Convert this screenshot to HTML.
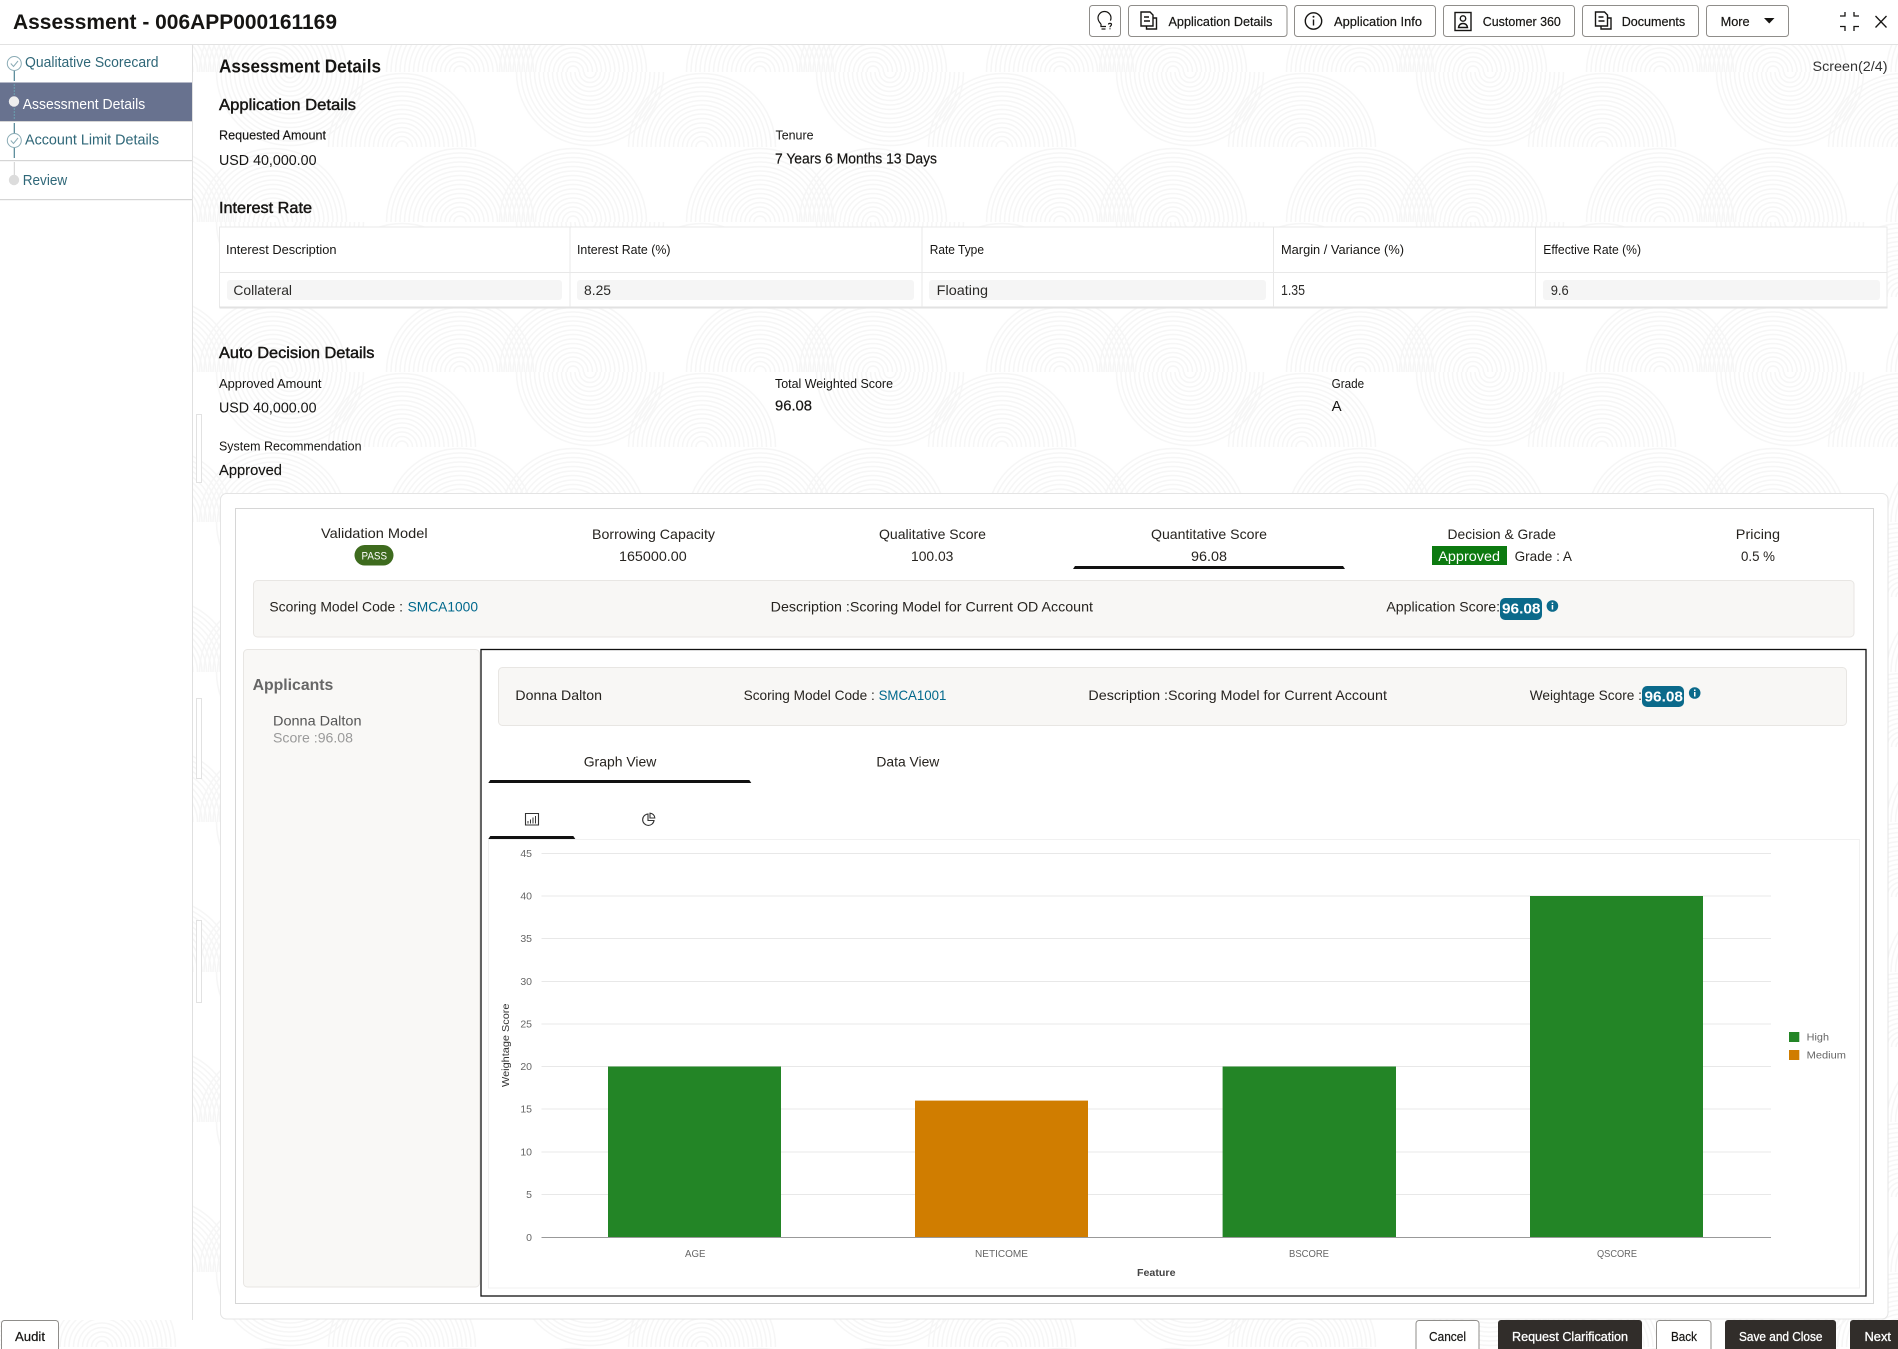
<!DOCTYPE html>
<html lang="en"><head><meta charset="utf-8"><title>Assessment - 006APP000161169</title>
<style>
html,body{margin:0;padding:0;background:#fff;width:1898px;height:1349px;overflow:hidden}
svg{display:block}
text{font-family:"Liberation Sans",sans-serif;fill:#161513;white-space:pre}
.m{stroke:#161513;stroke-width:.3}
.l{font-size:13px}.v{font-size:14.5px}.h{font-size:16px;stroke:#161513;stroke-width:.45}
.tb{font-size:13px}.c{font-size:14px;fill:#2b2a28}
.s{font-size:14.5px;fill:#2f6778}
.a{font-size:14px;fill:#26231f}
.btn{font-size:13px;stroke:#161513;stroke-width:.2}
.w{fill:#fff;stroke:#fff;stroke-width:.3;font-size:13px}
.t{font-size:10.5px;fill:#666}
</style></head><body>
<svg xmlns="http://www.w3.org/2000/svg" width="1898" height="1349" viewBox="0 0 1898 1349">
<defs>
<g id="rings" fill="none" stroke="#f6f6f6" stroke-width="1.5">
<circle r="6"/><circle r="10.5"/><circle r="15"/><circle r="19.5"/><circle r="24"/><circle r="28.5"/><circle r="33"/><circle r="37.5"/><circle r="42"/><circle r="46.5"/><circle r="51"/><circle r="55.5"/><circle r="60"/><circle r="64.5"/><circle r="69"/><circle r="73.5"/>
</g>
<clipPath id="r1"><rect x="0" y="0" width="300" height="75"/></clipPath>
<clipPath id="r2"><rect x="0" y="75" width="300" height="75"/></clipPath>
<pattern id="bg" patternUnits="userSpaceOnUse" x="0" y="72" width="300" height="150">
<rect width="300" height="150" fill="#fff"/>
<g clip-path="url(#r1)">
<use href="#rings" x="102" y="75"/>
<use href="#rings" x="290" y="0"/>
<use href="#rings" x="-10" y="0"/>
</g>
<g clip-path="url(#r2)">
<use href="#rings" x="160" y="150"/>
<use href="#rings" x="273" y="150"/>
<use href="#rings" x="-27" y="150"/>
</g>
</pattern>
</defs>

<!-- page background -->
<rect x="0" y="44" width="1898" height="1305" fill="url(#bg)"/>

<!-- header -->
<rect x="0" y="0" width="1898" height="44" fill="#fff"/>
<rect x="0" y="44" width="1898" height="1" fill="#e2e2e2"/>
<text x="13" y="29" font-size="21" font-weight="700" textLength="324" lengthAdjust="spacingAndGlyphs">Assessment - 006APP000161169</text>

<g fill="#fff" stroke="#8f8d8a">
<rect x="1089.5" y="5.5" width="31" height="31" rx="3"/>
<rect x="1128.5" y="5.5" width="158.5" height="31" rx="3"/>
<rect x="1294.5" y="5.5" width="141" height="31" rx="3"/>
<rect x="1443.5" y="5.5" width="131" height="31" rx="3"/>
<rect x="1582.5" y="5.5" width="116" height="31" rx="3"/>
<rect x="1706.5" y="5.5" width="82" height="31" rx="3"/>
</g>
<!-- help bulb -->
<g fill="none" stroke="#161513" stroke-width="1.2">
<path d="M1101 24c-2-2-3-3.5-3-6a6.5 6.5 0 0 1 13 0c0 1-.2 1.8-.6 2.6"/>
<path d="M1101 24v2.5h5"/><path d="M1101.5 29h4"/>
<path d="M1108.5 24.5c0-1.5 3-1.500 3 0 0 1.300-1.500 1.300-1.500 2.700"/>
<path d="M1110 28.300v1"/>
</g>
<!-- doc icons -->
<g fill="none" stroke="#161513" stroke-width="1.4">
<path d="M1141 12h9l3 3v11h-12z"/><path d="M1153 18h3.5v11h-10v-3"/><path d="M1144 17h5M1144 21h6"/>
<path d="M1595.5 12h9l3 3v11h-12z"/><path d="M1607.5 18h3.5v11h-10v-3"/><path d="M1598.5 17h5M1598.5 21h6"/>
<circle cx="1313.5" cy="21" r="8.2"/>
<path d="M1313.5 19.5v6"/>
<rect x="1455" y="12.5" width="16" height="18"/>
<circle cx="1463" cy="18.5" r="2.7"/>
<path d="M1458.5 27.500c.5-3 2-4 4.500-4s4 1 4.500 4z"/>
</g>
<circle cx="1313.5" cy="16.7" r="1" fill="#161513"/>
<text x="1168.5" y="26" class="btn" textLength="104" lengthAdjust="spacingAndGlyphs">Application Details</text>
<text x="1334" y="26" class="btn" textLength="88" lengthAdjust="spacingAndGlyphs">Application Info</text>
<text x="1482.8" y="26" class="btn" textLength="78" lengthAdjust="spacingAndGlyphs">Customer 360</text>
<text x="1621.7" y="26" class="btn" textLength="63.5" lengthAdjust="spacingAndGlyphs">Documents</text>
<text x="1720.6" y="26" class="btn" textLength="29" lengthAdjust="spacingAndGlyphs">More</text>
<path d="M1764 18h10.5l-5.250 5.500z" fill="#161513"/>
<g fill="none" stroke="#161513" stroke-width="1.3">
<path d="M1845 12v4h-5M1854 12v4h5M1845 31v-4.5h-5M1854 31v-4.500h5"/>
<path d="M1875.5 16l11 11.500M1886.5 16l-11 11.500"/>
</g>

<!-- sidebar -->
<rect x="0" y="45" width="192.5" height="1275" fill="#fff"/>
<rect x="192" y="45" width="1" height="1275" fill="#e0e0e0"/>
<rect x="0" y="82.5" width="192" height="38.5" fill="#68728f"/>
<rect x="0" y="160" width="192" height="1.2" fill="#d5d5d5"/>
<rect x="0" y="199" width="192" height="1.2" fill="#d5d5d5"/>
<rect x="0" y="121" width="192" height="1" fill="#d5d5d5"/>
<g fill="none" stroke="#8aabb5" stroke-width="1">
<circle cx="14.3" cy="63.5" r="7"/>
<path d="M10.8 63.5l2.700 3 4.500-5.500"/>
<circle cx="14.3" cy="140.5" r="7"/>
<path d="M10.8 140.5l2.700 3 4.500-5.500"/>
</g>
<path d="M14.3 71v10M14.3 123v10M14.3 148v10" stroke="#4e8394" stroke-width="1.2"/>
<path d="M14.3 84v11M14.3 108v11" stroke="#6aa0b0" stroke-width="1" stroke-dasharray="2 1"/>
<path d="M14.3 162v13" stroke="#cfcfcf" stroke-width="1"/>
<circle cx="14" cy="101.5" r="5.2" fill="#eee"/>
<circle cx="14" cy="180" r="5.2" fill="#dcdcdc"/>
<text x="25" y="67" class="s" textLength="133.5" lengthAdjust="spacingAndGlyphs">Qualitative Scorecard</text>
<text x="22.7" y="109" class="s" style="fill:#fff" textLength="122.5" lengthAdjust="spacingAndGlyphs">Assessment Details</text>
<text x="25" y="144.5" class="s" textLength="134" lengthAdjust="spacingAndGlyphs">Account Limit Details</text>
<text x="22.7" y="185" class="s" textLength="44.5" lengthAdjust="spacingAndGlyphs">Review</text>

<!-- scroll handles -->
<g fill="#fff" stroke="#e2e2e2"><rect x="196.5" y="414.5" width="5" height="68"/><rect x="196.5" y="698.5" width="5" height="80"/><rect x="196.5" y="920.5" width="5" height="82"/></g>

<!-- main headings -->
<text x="219" y="72.5" font-size="18" font-weight="700" textLength="162" lengthAdjust="spacingAndGlyphs">Assessment Details</text>
<text x="1812.5" y="71" font-size="14" textLength="75" lengthAdjust="spacingAndGlyphs" style="fill:#333">Screen(2/4)</text>
<text x="219" y="110" class="h" textLength="137" lengthAdjust="spacingAndGlyphs">Application Details</text>
<text x="219" y="139.300" class="l m" textLength="107" lengthAdjust="spacingAndGlyphs" style="stroke-width:.15">Requested Amount</text>
<text x="219" y="165" class="v" textLength="97.5" lengthAdjust="spacingAndGlyphs">USD 40,000.00</text>
<text x="775.5" y="139.3" class="l" textLength="38" lengthAdjust="spacingAndGlyphs">Tenure</text>
<text x="775" y="163.3" class="v m" textLength="162" lengthAdjust="spacingAndGlyphs" style="stroke-width:.2">7 Years 6 Months 13 Days</text>
<text x="219" y="213" class="h" textLength="93" lengthAdjust="spacingAndGlyphs">Interest Rate</text>

<!-- table -->
<rect x="219.5" y="227" width="1667.5" height="80" fill="#fff" stroke="#e9e9e9"/>
<rect x="219.5" y="272" width="1667.5" height="1" fill="#e8e8e8"/>
<rect x="219.5" y="306.5" width="1668" height="2" fill="#e2e2e2"/>
<g fill="#e8e8e8"><rect x="569.5" y="227" width="1" height="80"/><rect x="921.5" y="227" width="1" height="80"/><rect x="1273" y="227" width="1" height="80"/><rect x="1535" y="227" width="1" height="80"/></g>
<g fill="#f5f5f5"><rect x="227" y="280" width="335" height="20" rx="3"/><rect x="577" y="280" width="337" height="20" rx="3"/><rect x="929" y="280" width="337" height="20" rx="3"/><rect x="1543" y="280" width="337" height="20" rx="3"/></g>
<text x="226" y="254" class="tb" textLength="110.5" lengthAdjust="spacingAndGlyphs">Interest Description</text>
<text x="577" y="254" class="tb" textLength="93.5" lengthAdjust="spacingAndGlyphs">Interest Rate (%)</text>
<text x="929.7" y="254" class="tb" textLength="54.3" lengthAdjust="spacingAndGlyphs">Rate Type</text>
<text x="1281" y="254" class="tb" textLength="123" lengthAdjust="spacingAndGlyphs">Margin / Variance (%)</text>
<text x="1543.3" y="254" class="tb" textLength="97.7" lengthAdjust="spacingAndGlyphs">Effective Rate (%)</text>
<text x="233.4" y="295" class="c" textLength="58.6" lengthAdjust="spacingAndGlyphs">Collateral</text>
<text x="584" y="295" class="c" textLength="27" lengthAdjust="spacingAndGlyphs">8.25</text>
<text x="936.7" y="295" class="c" textLength="51.3" lengthAdjust="spacingAndGlyphs">Floating</text>
<text x="1281" y="295" class="c" style="font-size:15px" textLength="24" lengthAdjust="spacingAndGlyphs">1.35</text>
<text x="1550.7" y="295" class="c" textLength="18" lengthAdjust="spacingAndGlyphs">9.6</text>

<!-- auto decision -->
<text x="219" y="358" class="h" textLength="155.5" lengthAdjust="spacingAndGlyphs">Auto Decision Details</text>
<text x="219" y="388" class="l" textLength="102.5" lengthAdjust="spacingAndGlyphs">Approved Amount</text>
<text x="219" y="412.7" class="v" textLength="97.5" lengthAdjust="spacingAndGlyphs">USD 40,000.00</text>
<text x="775" y="388" class="l" textLength="118" lengthAdjust="spacingAndGlyphs">Total Weighted Score</text>
<text x="775" y="410.7" class="v m" textLength="37" lengthAdjust="spacingAndGlyphs" style="stroke-width:.2">96.08</text>
<text x="1331.6" y="388" class="l" textLength="32.5" lengthAdjust="spacingAndGlyphs">Grade</text>
<text x="1331.6" y="411" class="v" textLength="10" lengthAdjust="spacingAndGlyphs">A</text>
<text x="219" y="450.7" class="l" textLength="142.5" lengthAdjust="spacingAndGlyphs">System Recommendation</text>
<text x="219" y="475" class="v" textLength="63" lengthAdjust="spacingAndGlyphs" style="stroke:#161513;stroke-width:.15">Approved</text>

<!-- cards -->
<rect x="220.5" y="493.5" width="1667.5" height="825.5" rx="6" fill="#fff" stroke="#e4e4e4"/>
<rect x="235.5" y="508.5" width="1638" height="795" fill="#fff" stroke="#d6d6d6"/>

<text x="321" y="538" class="a" textLength="106.6" lengthAdjust="spacingAndGlyphs">Validation Model</text>
<rect x="354.5" y="545" width="39" height="20.5" rx="10.25" fill="#3e6b1e"/>
<text x="361.5" y="559.5" font-size="11" style="fill:#fff" textLength="25.5" lengthAdjust="spacingAndGlyphs">PASS</text>
<text x="592" y="539" class="a" textLength="123" lengthAdjust="spacingAndGlyphs">Borrowing Capacity</text>
<text x="619" y="561" class="a" textLength="67.7" lengthAdjust="spacingAndGlyphs">165000.00</text>
<text x="879" y="539" class="a" textLength="107" lengthAdjust="spacingAndGlyphs">Qualitative Score</text>
<text x="911" y="561" class="a" textLength="42.4" lengthAdjust="spacingAndGlyphs">100.03</text>
<text x="1151" y="539" class="a" textLength="116" lengthAdjust="spacingAndGlyphs">Quantitative Score</text>
<text x="1191" y="561" class="a" textLength="36" lengthAdjust="spacingAndGlyphs">96.08</text>
<path d="M1073 569l2-3h268l2 3z" fill="#111"/>
<text x="1447.5" y="539" class="a" textLength="108.5" lengthAdjust="spacingAndGlyphs">Decision &amp; Grade</text>
<rect x="1432" y="546" width="75" height="19" fill="#0c7a10"/>
<text x="1438.3" y="561" font-size="14" style="fill:#fff" textLength="61.7" lengthAdjust="spacingAndGlyphs">Approved</text>
<text x="1514.6" y="561" class="a" textLength="57.4" lengthAdjust="spacingAndGlyphs">Grade : A</text>
<text x="1735.8" y="539" class="a" textLength="44.2" lengthAdjust="spacingAndGlyphs">Pricing</text>
<text x="1741" y="561" class="a" textLength="34" lengthAdjust="spacingAndGlyphs">0.5 %</text>

<!-- summary bar -->
<rect x="253.5" y="580.5" width="1600.5" height="56.5" rx="4" fill="#f8f7f5" stroke="#e8e6e3"/>
<text x="269.4" y="611.7" class="a" textLength="133.6" lengthAdjust="spacingAndGlyphs">Scoring Model Code :</text>
<text x="407.6" y="611.7" class="a" style="fill:#00688c" textLength="70.4" lengthAdjust="spacingAndGlyphs">SMCA1000</text>
<text x="770.7" y="611.7" class="a" textLength="322.3" lengthAdjust="spacingAndGlyphs">Description :Scoring Model for Current OD Account</text>
<text x="1386.4" y="611.7" class="a" textLength="113.6" lengthAdjust="spacingAndGlyphs">Application Score:</text>
<rect x="1500" y="598" width="42" height="22" rx="5" fill="#0b6a8b"/>
<text x="1502" y="613.5" font-size="14.5" font-weight="700" style="fill:#fff" textLength="38.5" lengthAdjust="spacingAndGlyphs">96.08</text>
<circle cx="1552.4" cy="606" r="5.8" fill="#0b6a8b"/>
<rect x="1551.7" y="605" width="1.5" height="4.5" fill="#fff"/><rect x="1551.7" y="602.5" width="1.5" height="1.5" fill="#fff"/>

<!-- applicants -->
<rect x="243.5" y="649.5" width="236" height="637.5" rx="4" fill="#f9f8f6" stroke="#e8e6e3"/>
<text x="252.6" y="690" font-size="16" font-weight="700" style="fill:#666" textLength="80.7" lengthAdjust="spacingAndGlyphs">Applicants</text>
<text x="273" y="725.7" class="a" style="fill:#555" textLength="88.5" lengthAdjust="spacingAndGlyphs">Donna Dalton</text>
<text x="273" y="742.7" class="a" style="fill:#9a9a9a" textLength="80" lengthAdjust="spacingAndGlyphs">Score :96.08</text>

<!-- black box -->
<rect x="481" y="649.5" width="1385" height="646.5" fill="#fff" stroke="#111" stroke-width="1.3"/>
<rect x="498.5" y="667.5" width="1348" height="58" rx="4" fill="#f8f7f5" stroke="#e8e6e3"/>
<text x="515.4" y="700" class="a" textLength="86.6" lengthAdjust="spacingAndGlyphs">Donna Dalton</text>
<text x="743.6" y="700" class="a" textLength="131.2" lengthAdjust="spacingAndGlyphs">Scoring Model Code :</text>
<text x="878.6" y="700" class="a" style="fill:#00688c" textLength="67.8" lengthAdjust="spacingAndGlyphs">SMCA1001</text>
<text x="1088.4" y="700" class="a" textLength="298.6" lengthAdjust="spacingAndGlyphs">Description :Scoring Model for Current Account</text>
<text x="1529.7" y="700" class="a" textLength="112.3" lengthAdjust="spacingAndGlyphs">Weightage Score :</text>
<rect x="1642" y="686" width="42" height="21" rx="5" fill="#0b6a8b"/>
<text x="1644.5" y="701.7" font-size="14.5" font-weight="700" style="fill:#fff" textLength="38.5" lengthAdjust="spacingAndGlyphs">96.08</text>
<circle cx="1694.7" cy="693" r="5.8" fill="#0b6a8b"/>
<rect x="1694" y="692" width="1.5" height="4.5" fill="#fff"/><rect x="1694" y="689.5" width="1.5" height="1.5" fill="#fff"/>

<!-- tabs -->
<text x="583.7" y="766.7" class="a" textLength="72.7" lengthAdjust="spacingAndGlyphs">Graph View</text>
<text x="876.4" y="766.7" class="a" textLength="62.9" lengthAdjust="spacingAndGlyphs">Data View</text>
<path d="M488.3 783l2-3h259l2 3z" fill="#111"/>
<path d="M488.3 839l2-3h83l2 3z" fill="#111"/>
<g fill="none" stroke="#333" stroke-width="1.1">
<path d="M525.5 813.5h13v11.5h-13z"/>
<path d="M528 823.5v-2.5M530.5 823.5v-4M533 823.5v-6M535.5 823.500v-7.500" stroke-width="1"/>
<path d="M648 814a5.700 5.700 0 1 0 6 6.500h-6z"/>
<path d="M650 813.200a5 5 0 0 1 4.800 4.800h-4.800z"/>
</g>

<!-- chart -->
<rect x="488.5" y="839.5" width="1371" height="448.5" fill="#fff" stroke="#f1f1f1"/>
<g stroke="#e8e8e8" stroke-width="1">
<path d="M541.5 853.5H1771M541.5 896H1771M541.5 938.5H1771M541.5 981.5H1771M541.5 1024H1771M541.5 1066.5H1771M541.5 1109H1771M541.5 1152H1771M541.5 1194.5H1771"/>
</g>
<rect x="608" y="1066.5" width="173" height="170.5" fill="#238526"/>
<rect x="915" y="1100.6" width="173" height="136.4" fill="#d07d00"/>
<rect x="1222.6" y="1066.5" width="173.4" height="170.5" fill="#238526"/>
<rect x="1530" y="896" width="173" height="341" fill="#238526"/>
<path d="M541.5 1237.5H1771" stroke="#999" stroke-width="1"/>
<g text-anchor="end">
<text x="532" y="857" class="t">45</text><text x="532" y="899.5" class="t">40</text><text x="532" y="942" class="t">35</text><text x="532" y="985" class="t">30</text><text x="532" y="1027.5" class="t">25</text><text x="532" y="1070" class="t">20</text><text x="532" y="1112.5" class="t">15</text><text x="532" y="1155.5" class="t">10</text><text x="532" y="1198" class="t">5</text><text x="532" y="1241" class="t">0</text>
</g>
<text x="685" y="1257" class="t" textLength="20.4" lengthAdjust="spacingAndGlyphs">AGE</text>
<text x="975" y="1257" class="t" textLength="53" lengthAdjust="spacingAndGlyphs">NETICOME</text>
<text x="1289" y="1257" class="t" textLength="40" lengthAdjust="spacingAndGlyphs">BSCORE</text>
<text x="1597" y="1257" class="t" textLength="40" lengthAdjust="spacingAndGlyphs">QSCORE</text>
<text x="1137" y="1276" font-size="10.5" font-weight="700" style="fill:#444" textLength="38.5" lengthAdjust="spacingAndGlyphs">Feature</text>
<text transform="translate(509 1087) rotate(-90)" font-size="10.5" style="fill:#333" textLength="83.5" lengthAdjust="spacingAndGlyphs">Weightage Score</text>
<rect x="1789" y="1032" width="10.3" height="10" fill="#238526"/>
<rect x="1789" y="1050" width="10.3" height="10" fill="#d07d00"/>
<text x="1806.7" y="1040.7" class="t" textLength="22.3" lengthAdjust="spacingAndGlyphs">High</text>
<text x="1806.7" y="1058.7" class="t" textLength="39.3" lengthAdjust="spacingAndGlyphs">Medium</text>

<!-- footer -->
<rect x="1.5" y="1320.5" width="57" height="34" rx="3" fill="#fff" stroke="#8f8d8a"/>
<text x="15" y="1341" class="btn" textLength="30" lengthAdjust="spacingAndGlyphs">Audit</text>
<rect x="1416" y="1320.5" width="63" height="34" rx="3" fill="#fff" stroke="#8f8d8a"/>
<text x="1429" y="1341" class="btn" textLength="37" lengthAdjust="spacingAndGlyphs">Cancel</text>
<rect x="1498" y="1320" width="144" height="35" rx="3" fill="#312d2a"/>
<text x="1512" y="1341" class="w" textLength="116" lengthAdjust="spacingAndGlyphs">Request Clarification</text>
<rect x="1656.5" y="1320.5" width="54.5" height="34" rx="3" fill="#fff" stroke="#8f8d8a"/>
<text x="1671" y="1341" class="btn" textLength="26" lengthAdjust="spacingAndGlyphs">Back</text>
<rect x="1725" y="1320" width="111" height="35" rx="3" fill="#312d2a"/>
<text x="1739" y="1341" class="w" textLength="83.5" lengthAdjust="spacingAndGlyphs">Save and Close</text>
<rect x="1850" y="1320" width="60" height="35" rx="3" fill="#312d2a"/>
<text x="1864.5" y="1341" class="w" textLength="26.5" lengthAdjust="spacingAndGlyphs">Next</text>
</svg>
</body></html>
